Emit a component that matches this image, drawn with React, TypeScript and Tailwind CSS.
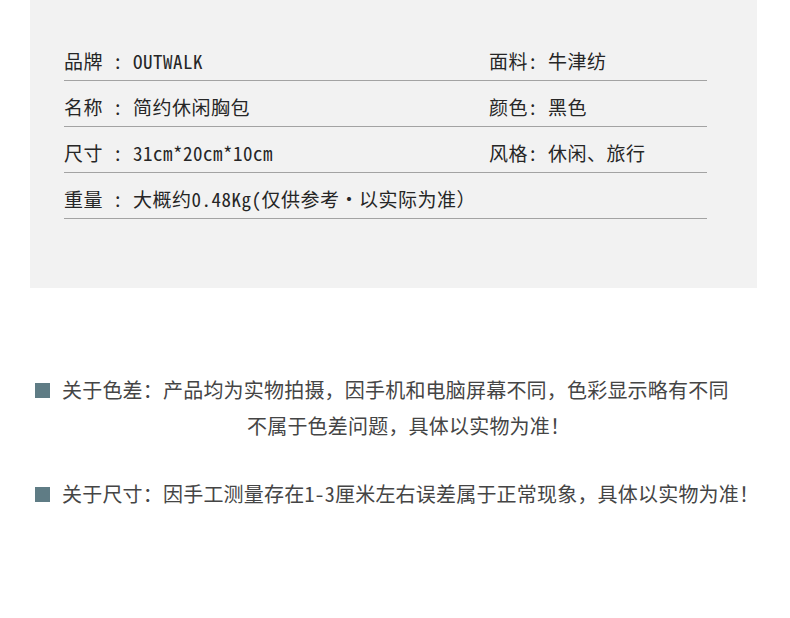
const specs: [string, string][] = [
  ["品牌 : OUTWALK", "面料: 牛津纺"],
  ["名称 : 简约休闲胸包", "颜色: 黑色"],
  ["尺寸 : 31cm*20cm*10cm", "风格: 休闲、旅行"],
  ["重量 : 大概约0.48Kg(仅供参考·以实际为准）", ""],
];

const font = {
  fontFamily: '"Noto Sans Mono CJK SC", "DejaVu Sans Mono", "Noto Sans CJK SC", monospace',
};

function Square() {
  return <span className="mr-[12px] inline-block h-[15px] w-[15px] shrink-0 bg-[#5f7c85]" />;
}

export default function App() {
  return (
    <div className="h-[618px] w-[790px] bg-white" style={font}>
      <div className="ml-[30px] h-[288px] w-[727px] bg-[#f2f2f2] pl-[34px] pt-[35px]">
        <div className="w-[643px]">
          {specs.map(([left, right], i) => (
            <div
              key={i}
              className="grid h-[46px] grid-cols-[425px_1fr] items-end border-b border-[#a3a3a3] pb-[5px] text-[19px] leading-[28px] tracking-[0.5px] text-[#262626]"
            >
              <span className="whitespace-pre">{left}</span>
              <span className="whitespace-pre">{right}</span>
            </div>
          ))}
        </div>
      </div>

      <div className="pt-[84px] text-[20px] leading-[36px] tracking-[0.2px] text-[#454545]">
        <div className="flex items-center pl-[35px]">
          <Square />
          <span className="whitespace-pre">关于色差：产品均为实物拍摄，因手机和电脑屏幕不同，色彩显示略有不同</span>
        </div>
        <div className="pl-[247px]">不属于色差问题，具体以实物为准！</div>
        <div className="mt-[32px] flex items-center pl-[35px]">
          <Square />
          <span className="whitespace-pre">关于尺寸：因手工测量存在1-3厘米左右误差属于正常现象，具体以实物为准！</span>
        </div>
      </div>
    </div>
  );
}
